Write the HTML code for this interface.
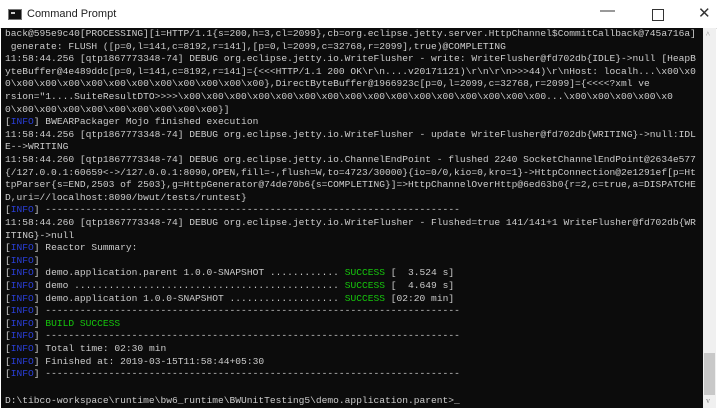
<!DOCTYPE html>
<html><head><style>
html,body{margin:0;padding:0;width:717px;height:409px;overflow:hidden;background:#fff;}
.title{position:absolute;left:0;top:0;width:717px;height:28px;background:#fff;border-bottom:1px solid #ddd;font-family:"Liberation Sans",sans-serif;font-size:11px;color:#222;}
.title .ic{position:absolute;left:8px;top:9px;width:14px;height:11px;background:#111;border:1px solid #777;box-sizing:border-box}
.title .ic:after{content:"";position:absolute;left:2px;top:2px;width:4px;height:2px;background:#ccc}
.title .t{position:absolute;left:27px;top:8px;}
.title .b{position:absolute;top:4px;font-size:15px;color:#333;}
.con{position:absolute;left:1px;top:28px;width:702px;height:380px;background:#0c0c0c;overflow:hidden;}
.sb{position:absolute;left:703px;top:28px;width:13px;height:380px;background:#f0f0f0;}
.l{position:absolute;left:4px;white-space:pre;font-family:"Liberation Mono",monospace;font-size:9.6px;color:#cccccc;line-height:12.6px;}
.i{color:#2a3fd8}.g{color:#16c60c}
</style></head><body>
<div class="title"><div class="ic"></div><div class="t">Command Prompt</div>
<div class="b" style="left:600px;top:2px">—</div>
<div class="b" style="left:652px;width:10px;height:10px;border:1px solid #333;top:9px"></div>
<div class="b" style="left:698px">✕</div></div>
<div class="con">
<div class="l" style="top:0px">back@595e9c40[PROCESSING][i=HTTP/1.1{s=200,h=3,cl=2099},cb=org.eclipse.jetty.server.HttpChannel$CommitCallback@745a716a]</div>
<div class="l" style="top:12.6px"> generate: FLUSH ([p=0,l=141,c=8192,r=141],[p=0,l=2099,c=32768,r=2099],true)@COMPLETING</div>
<div class="l" style="top:25.2px">11:58:44.256 [qtp1867773348-74] DEBUG org.eclipse.jetty.io.WriteFlusher - write: WriteFlusher@fd702db{IDLE}->null [HeapB</div>
<div class="l" style="top:37.8px">yteBuffer@4e489ddc[p=0,l=141,c=8192,r=141]={&lt;&lt;&lt;HTTP/1.1 200 OK\r\n....v20171121)\r\n\r\n&gt;&gt;&gt;44)\r\nHost: localh...\x00\x0</div>
<div class="l" style="top:50.4px">0\x00\x00\x00\x00\x00\x00\x00\x00\x00\x00\x00},DirectByteBuffer@1966923c[p=0,l=2099,c=32768,r=2099]={&lt;&lt;&lt;&lt;?xml ve</div>
<div class="l" style="top:63px">rsion="1....SuiteResultDTO&gt;&gt;&gt;&gt;\x00\x00\x00\x00\x00\x00\x00\x00\x00\x00\x00\x00\x00\x00\x00\x00...\x00\x00\x00\x00\x0</div>
<div class="l" style="top:75.6px">0\x00\x00\x00\x00\x00\x00\x00\x00\x00}]</div>
<div class="l" style="top:88.2px">[<span class="i">INFO</span>] BWEARPackager Mojo finished execution</div>
<div class="l" style="top:100.8px">11:58:44.256 [qtp1867773348-74] DEBUG org.eclipse.jetty.io.WriteFlusher - update WriteFlusher@fd702db{WRITING}->null:IDL</div>
<div class="l" style="top:113.4px">E-->WRITING</div>
<div class="l" style="top:126px">11:58:44.260 [qtp1867773348-74] DEBUG org.eclipse.jetty.io.ChannelEndPoint - flushed 2240 SocketChannelEndPoint@2634e577</div>
<div class="l" style="top:138.6px">{/127.0.0.1:60659&lt;-&gt;/127.0.0.1:8090,OPEN,fill=-,flush=W,to=4723/30000}{io=0/0,kio=0,kro=1}->HttpConnection@2e1291ef[p=Ht</div>
<div class="l" style="top:151.2px">tpParser{s=END,2503 of 2503},g=HttpGenerator@74de70b6{s=COMPLETING}]=&gt;HttpChannelOverHttp@6ed63b0{r=2,c=true,a=DISPATCHE</div>
<div class="l" style="top:163.8px">D,uri=//localhost:8090/bwut/tests/runtest}</div>
<div class="l" style="top:176.4px">[<span class="i">INFO</span>] ------------------------------------------------------------------------</div>
<div class="l" style="top:189px">11:58:44.260 [qtp1867773348-74] DEBUG org.eclipse.jetty.io.WriteFlusher - Flushed=true 141/141+1 WriteFlusher@fd702db{WR</div>
<div class="l" style="top:201.6px">ITING}->null</div>
<div class="l" style="top:214.2px">[<span class="i">INFO</span>] Reactor Summary:</div>
<div class="l" style="top:226.8px">[<span class="i">INFO</span>]</div>
<div class="l" style="top:239.4px">[<span class="i">INFO</span>] demo.application.parent 1.0.0-SNAPSHOT ............ <span class="g">SUCCESS</span> [  3.524 s]</div>
<div class="l" style="top:252px">[<span class="i">INFO</span>] demo .............................................. <span class="g">SUCCESS</span> [  4.649 s]</div>
<div class="l" style="top:264.6px">[<span class="i">INFO</span>] demo.application 1.0.0-SNAPSHOT ................... <span class="g">SUCCESS</span> [02:20 min]</div>
<div class="l" style="top:277.2px">[<span class="i">INFO</span>] ------------------------------------------------------------------------</div>
<div class="l" style="top:289.8px">[<span class="i">INFO</span>] <span class="g">BUILD SUCCESS</span></div>
<div class="l" style="top:302.4px">[<span class="i">INFO</span>] ------------------------------------------------------------------------</div>
<div class="l" style="top:315px">[<span class="i">INFO</span>] Total time: 02:30 min</div>
<div class="l" style="top:327.6px">[<span class="i">INFO</span>] Finished at: 2019-03-15T11:58:44+05:30</div>
<div class="l" style="top:340.2px">[<span class="i">INFO</span>] ------------------------------------------------------------------------</div>
<div class="l" style="top:367px">D:\tibco-workspace\runtime\bw6_runtime\BWUnitTesting5\demo.application.parent&gt;_</div>
</div>
<div class="sb"><div style="position:absolute;left:3px;top:2px;font-size:8px;color:#888">^</div><div style="position:absolute;left:1px;top:325px;width:11px;height:42px;background:#c8c8c8"></div><div style="position:absolute;left:3px;top:368px;font-size:8px;color:#888">v</div></div>
</body></html>
